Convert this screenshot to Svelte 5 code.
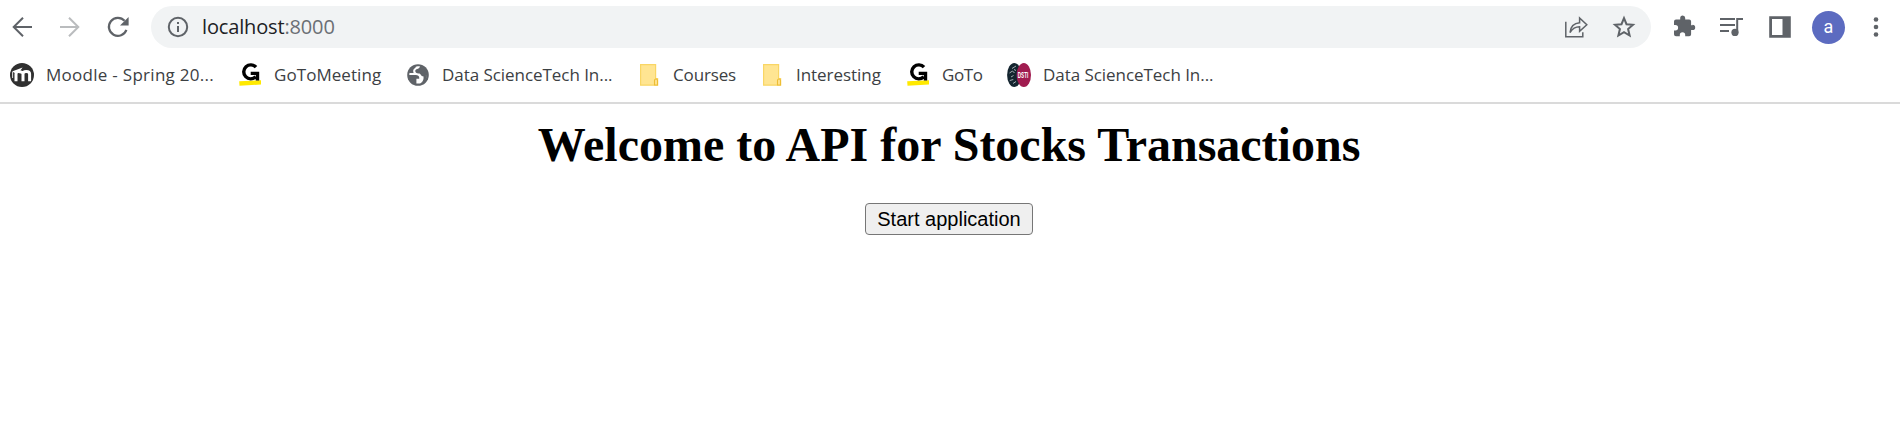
<script>
  const bookmarks = [
    { icon: 'moodle', label: 'Moodle - Spring 20...', width: 228, spacing: 0.28 },
    { icon: 'goto', label: 'GoToMeeting', width: 168, spacing: 0.06 },
    { icon: 'globe', label: 'Data ScienceTech In...', width: 231, spacing: -0.05 },
    { icon: 'folder', label: 'Courses', width: 123, spacing: -0.15 },
    { icon: 'folder', label: 'Interesting', width: 146, spacing: -0.05 },
    { icon: 'goto', label: 'GoTo', width: 101, spacing: -0.4 },
    { icon: 'dsti', label: 'Data ScienceTech In...', width: 220, spacing: -0.05 }
  ];
</script>

<div class="browser">
  <header>
    <div class="toolbar">
      <nav>
        <svg width="24" height="24" viewBox="0 0 24 24" fill="none" stroke="#5f6368" stroke-width="2"><path d="M22 12H3.8M13 2.7 3.7 12l9.3 9.3" /></svg>
        <svg width="24" height="24" viewBox="0 0 24 24" fill="none" stroke="#babcbe" stroke-width="2"><path d="M2 12h18.2M11 2.7l9.3 9.3-9.3 9.3" /></svg>
        <svg width="24" height="24" viewBox="0 0 24 24"><path d="M20.4 14.8A9 9 0 1 1 18.6 5.8" fill="none" stroke="#5f6368" stroke-width="2.2" /><path d="M22.6 2v8.6H14z" fill="#5f6368" /></svg>
      </nav>
      <div class="address">
        <svg width="22" height="22" viewBox="0 0 22 22"><circle cx="11" cy="11" r="9.2" fill="none" stroke="#5f6368" stroke-width="2" /><path d="M10 10h2v6h-2zM10 6h2v2.1h-2z" fill="#5f6368" /></svg>
        <div class="url">localhost<span>:8000</span></div>
        <svg class="share" width="24" height="24" viewBox="0 0 24 24" fill="none" stroke="#5f6368" stroke-width="1.5"><path d="M1.8 6.8v14.9h17v-4.4" /><path d="M6 17.5C6.7 11.5 10 8.2 15.6 7.8V3l7.2 6.8-7.2 6.6v-4.6C11.3 11.8 8.3 13.7 6 17.5z" /></svg>
        <svg width="24" height="24" viewBox="0 0 24 24" fill="none" stroke="#5f6368" stroke-width="2"><path d="m12 3.2 2.5 6 6.5.6-4.9 4.3 1.5 6.4-5.6-3.4-5.6 3.4 1.5-6.4L3 9.8l6.5-.6z" /></svg>
      </div>
      <div class="actions">
        <svg width="24" height="24" viewBox="0 0 24 24" fill="#5f6368"><path d="M20.5 10.2h-1.4V6.5a2 2 0 0 0-2-2h-3.9V3.1a2.5 2.5 0 0 0-5 0v1.4H4a2 2 0 0 0-2 2v3.6h1.4a2.7 2.7 0 0 1 0 5.4H2v3.8a2 2 0 0 0 2 2h3.8v-1.4a2.7 2.7 0 0 1 5.4 0v1.4h3.9a2 2 0 0 0 2-2v-4.2h1.4a2.7 2.7 0 0 0 0-5.4z" /></svg>
        <svg width="26" height="24" viewBox="0 0 26 24"><path d="M2 4h15M2 10h15M2 16h9M19.2 18V4H25" fill="none" stroke="#5f6368" stroke-width="2" /><circle cx="17" cy="17.4" r="3.6" fill="#5f6368" /></svg>
        <svg width="24" height="24" viewBox="0 0 24 24"><path fill="#5f6368" fill-rule="evenodd" d="M1.2 1.2h21.6v21.6H1.2zM4 4v16h10.5V4z" /></svg>
        <div class="avatar">a</div>
        <svg width="8" height="24" viewBox="0 0 8 24" fill="#5f6368"><circle cx="4" cy="4.5" r="2.3" /><circle cx="4" cy="12" r="2.3" /><circle cx="4" cy="19.5" r="2.3" /></svg>
      </div>
    </div>

    <div class="bookmarks">
      {#each bookmarks as b}
        <div class="bookmark" style:width="{b.width}px">
          <svg width="24" height="24" viewBox="0 0 24 24">
            {#if b.icon === 'moodle'}
              <circle cx="12" cy="12" r="12" fill="#303030" />
              <path d="M6 18.2V11c0-1.5 1-2.5 2.5-2.5S13 9.5 13 11v7.2M13 11c0-1.5 1-2.5 3.2-2.5s3.4 1 3.4 2.5v7.2" fill="none" stroke="#fff" stroke-width="3" />
              <path d="M2 8.4 12.6 4.4 9.5 8.7 5 10z" fill="#fff" /><path d="M2.6 9v6" stroke="#ddd" />
            {:else if b.icon === 'goto'}
              <path d="m1.2 18.3 21.8-1v4.2L1.5 22.7z" fill="#ffe900" />
              <path d="M18 4.2A7 7 0 1 0 17.7 13.8M12.7 10.4h6.8v7" fill="none" stroke="#000" stroke-width="3.4" />
            {:else if b.icon === 'globe'}
              <circle cx="12" cy="12" r="10.8" fill="#5f6368" />
              <path d="M3.3 12h6.5c2 0 3.4 1 3.4 2.6v1.2h-2.8v4.6c5.5 1 10.3-3 10.3-8.4-1.1 1.3-2.2 1.3-3.4 1.3-2.6 0-2-2.9-4.6-2.9-2.3 0-3.4-.7-3.4-2.3 0-2.6 3.5-1.5 4.8-4.6C8.5 2 3.3 6.4 3.3 12z" fill="#fff" />
              <path d="M3 10C4 6 6.8 3.4 10.4 3.1 9.6 5.7 7.2 5.6 7.2 8.3c0 .8.2 1.3.5 1.7zM17.3 12.8c1.3 0 2.4-.1 3.6-1.2.4 4.6-2.4 8.3-6.6 9.2 2.2-1.8 4-4 3-8z" fill="#5f6368" />
            {:else if b.icon === 'folder'}
              <path d="M3.6 1.6h15v14h2v6.6h-17z" fill="#ffe592" stroke="#f9d665" stroke-width="1.2" />
              <path d="M17.5 22v-4.5c0-2 3-2 3 0V22z" fill="#ffe391" stroke="#edbd35" stroke-width="1.1" />
            {:else}
              <ellipse cx="7.3" cy="12" rx="7.2" ry="12" fill="#14252f" />
              <path d="M5 5.5 9 3M2.5 10l3-2 2 2M4 14l2.5-1.5M2.8 17.5l3.5-1M6 20.5l3-2M7 6.5l2 1" stroke="#a4adb2" fill="none" />
              <ellipse cx="16.8" cy="12" rx="7.2" ry="12" fill="#a01c50" />
              <text transform="translate(10.8 15.2) scale(.82 1.6)" class="mark">DSTI</text>
            {/if}
          </svg>
          <span style:letter-spacing="{b.spacing}px">{b.label}</span>
        </div>
      {/each}
    </div>
  </header>

  <main>
    <h1>Welcome to API for Stocks Transactions</h1>
    <button>Start application</button>
  </main>
</div>

<style>
  :global(body) { margin: 0; background: #fff; }
  .browser { width: 1900px; height: 424px; overflow: hidden; font-family: "Open Sans", sans-serif; }
  header { height: 104px; box-sizing: border-box; border-bottom: 2px solid #dadada; }
  svg { display: block; flex: none; }
  .toolbar { display: flex; align-items: center; height: 42px; padding-top: 6px; }
  nav { display: flex; gap: 24px; width: 141px; padding-left: 10px; }
  .address { display: flex; align-items: center; width: 1500px; height: 42px; box-sizing: border-box; border-radius: 21px; background: #f1f3f4; padding: 0 15px 0 16px; }
  .url { flex: 1; margin-left: 13px; font-size: 20px; letter-spacing: -0.15px; color: #202124; line-height: 42px; }
  .url span { color: #6b6f74; }
  .share { margin-right: 24px; }
  .actions { display: flex; align-items: center; flex: 1; padding-left: 21px; }
  .actions svg:nth-child(2) { margin-left: 22px; }
  .actions svg:nth-child(3) { margin-left: 24px; }
  .avatar { width: 33px; height: 33px; margin: 1px 27px 0 20px; border-radius: 50%; background: #5c6bc0; color: #fff; font: 400 18px/32px Roboto, sans-serif; text-align: center; flex: none; }
  .bookmarks { display: flex; align-items: center; height: 54px; padding-left: 10px; }
  .bookmark { display: flex; align-items: center; gap: 12px; flex: none; white-space: nowrap; font-size: 17px; line-height: 24px; color: #3c4043; }
  .mark { font: bold 5.6px "Liberation Sans", sans-serif; fill: #fff; }
  main { display: flex; flex-direction: column; align-items: center; padding-right: 2px; }
  h1 { margin: 13px 0 0; font: bold 48px/55px "Liberation Serif", serif; color: #000; white-space: nowrap; }
  button { width: 168px; height: 32px; margin: 31px 0 0; padding: 0; box-sizing: border-box; border: 1px solid #767676; border-radius: 4px; background: #efefef; color: #000; font: 20px/30px "Liberation Sans", sans-serif; white-space: nowrap; }
</style>
